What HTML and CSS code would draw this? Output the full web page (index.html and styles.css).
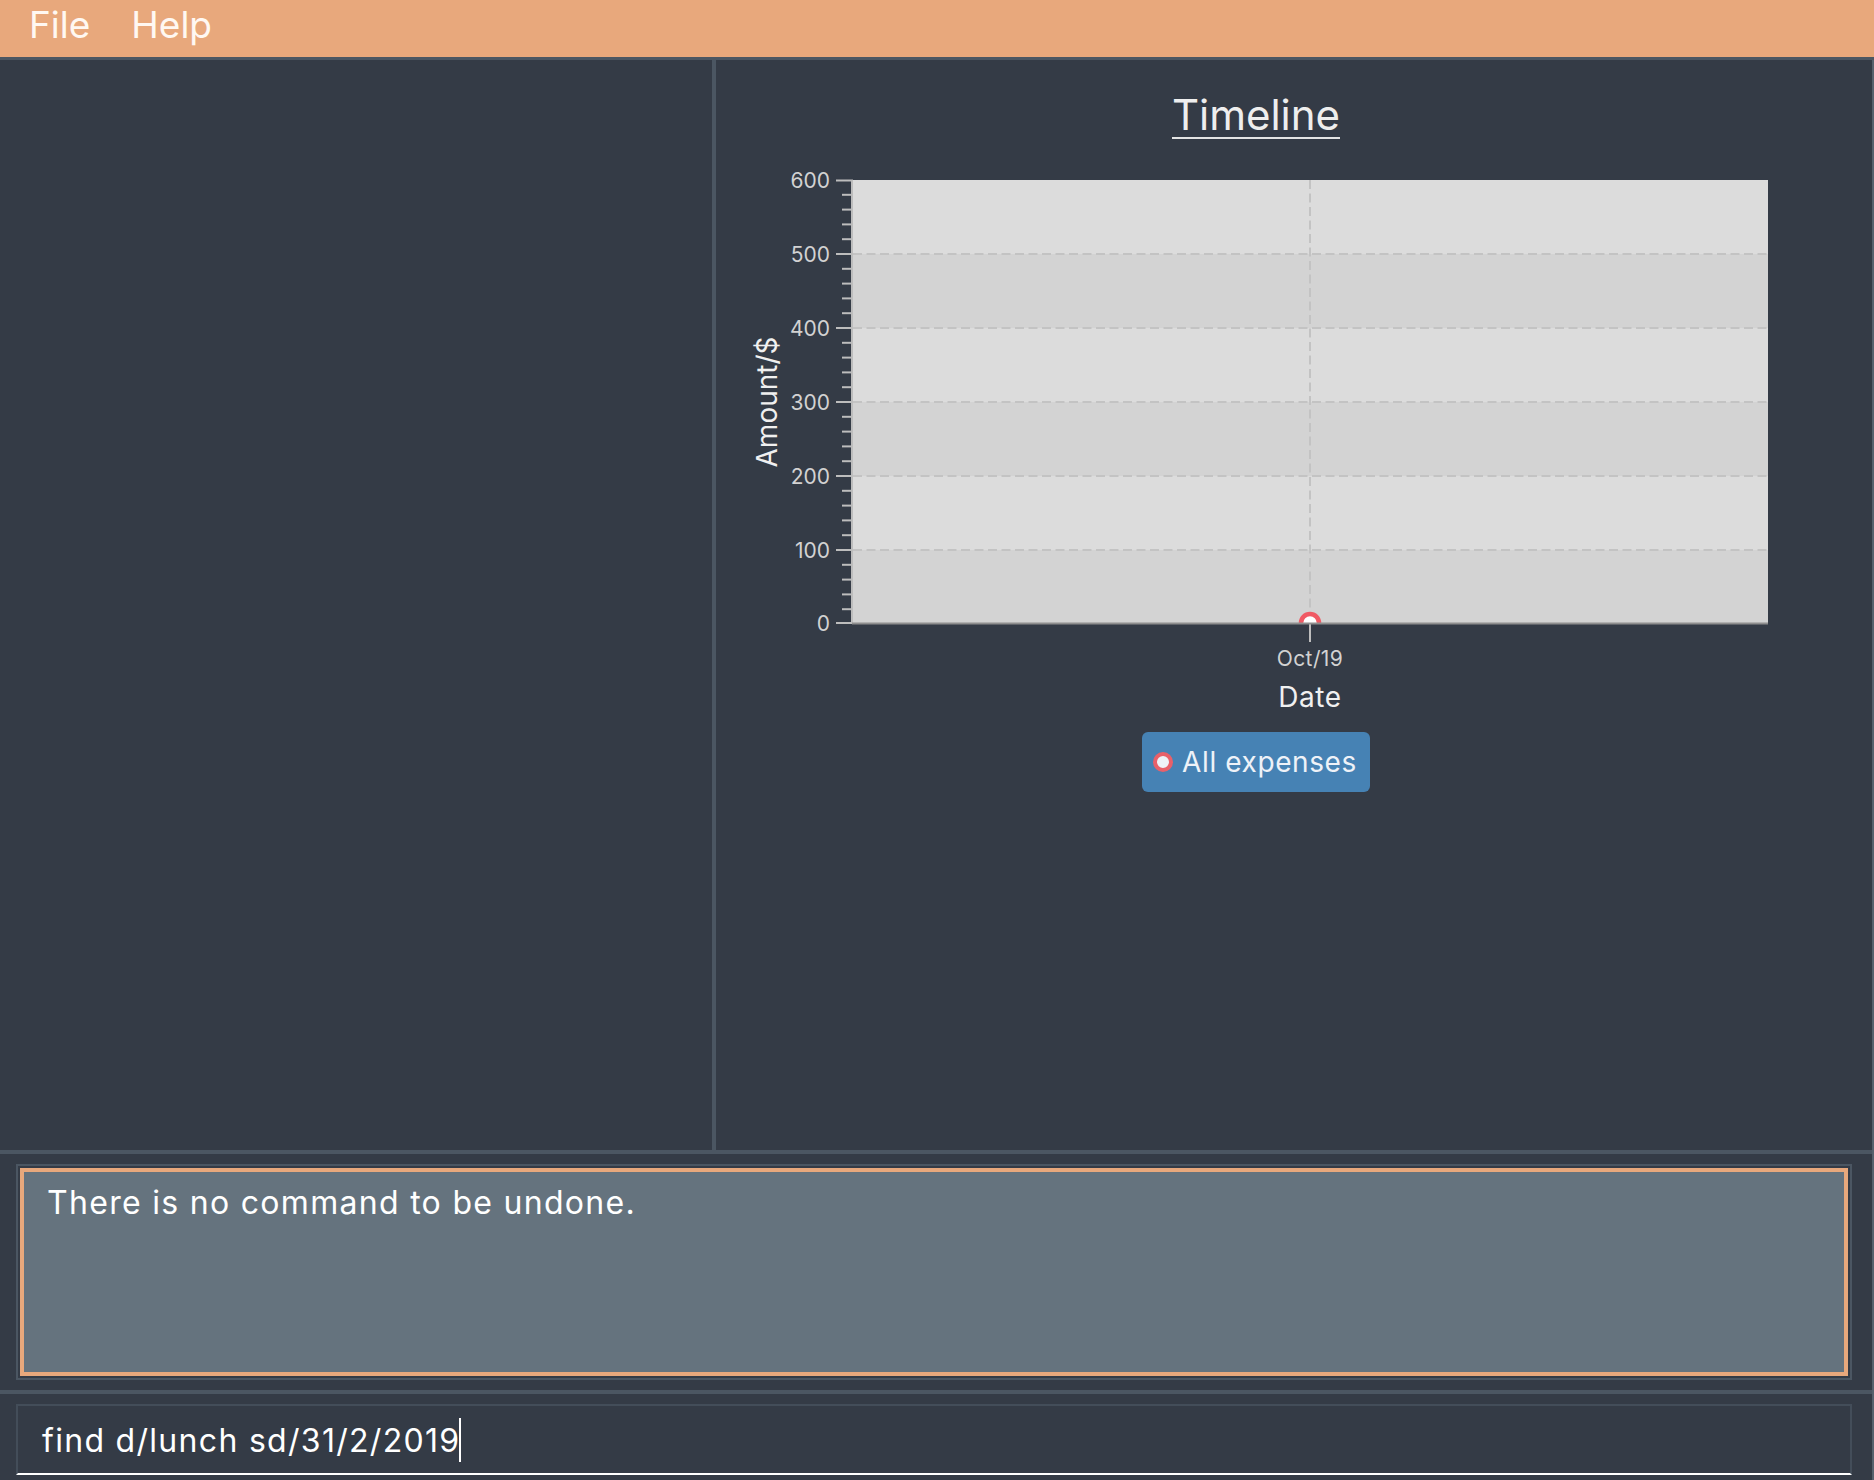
FILE: index.html
```html
<!DOCTYPE html>
<html>
<head>
<meta charset="utf-8">
<title>Expense Tracker</title>
<link rel="stylesheet" href="styles.css">
</head>
<body>
<div class="window">
  <div class="menubar">
    <span class="menu-item">File</span>
    <span class="menu-item">Help</span>
  </div>
  <div class="body-area">
    <div class="main">
      <div class="left-pane"></div>
      <div class="divider"></div>
      <div class="right-pane">
        <div class="chart">
          <div class="chart-title"><span class="title-text">Timeline</span></div>
          <svg class="plot" width="1040" height="570" viewBox="0 0 1040 570" xmlns="http://www.w3.org/2000/svg">
            <defs>
              <clipPath id="plotclip"><rect x="117" y="30" width="915" height="443"/></clipPath>
            </defs>
            <rect x="117" y="30" width="915" height="74" fill="#dcdcdc"/>
            <rect x="117" y="104" width="915" height="74" fill="#d3d3d3"/>
            <rect x="117" y="178" width="915" height="74" fill="#dcdcdc"/>
            <rect x="117" y="252" width="915" height="74" fill="#d3d3d3"/>
            <rect x="117" y="326" width="915" height="74" fill="#dcdcdc"/>
            <rect x="117" y="400" width="915" height="74" fill="#d3d3d3"/>
            <g stroke="#c3c3c3" stroke-width="2" stroke-dasharray="9 4.5">
              <line x1="117" y1="104" x2="1034" y2="104"/>
              <line x1="117" y1="178" x2="1034" y2="178"/>
              <line x1="117" y1="252" x2="1034" y2="252"/>
              <line x1="117" y1="326" x2="1034" y2="326"/>
              <line x1="117" y1="400" x2="1034" y2="400"/>
              <line x1="574" y1="30" x2="574" y2="474"/>
            </g>
            <g stroke="#bdbdbd" stroke-width="2">
              <line x1="116" y1="30" x2="116" y2="474"/>
              <line x1="100" y1="30.5" x2="117" y2="30.5"/>
              <line x1="100" y1="104" x2="117" y2="104"/>
              <line x1="100" y1="178" x2="117" y2="178"/>
              <line x1="100" y1="252" x2="117" y2="252"/>
              <line x1="100" y1="326" x2="117" y2="326"/>
              <line x1="100" y1="400" x2="117" y2="400"/>
              <line x1="100" y1="473" x2="117" y2="473"/>
              <line x1="106" y1="44.8" x2="117" y2="44.8"/>
              <line x1="106" y1="59.6" x2="117" y2="59.6"/>
              <line x1="106" y1="74.4" x2="117" y2="74.4"/>
              <line x1="106" y1="89.2" x2="117" y2="89.2"/>
              <line x1="106" y1="118.8" x2="117" y2="118.8"/>
              <line x1="106" y1="133.6" x2="117" y2="133.6"/>
              <line x1="106" y1="148.4" x2="117" y2="148.4"/>
              <line x1="106" y1="163.2" x2="117" y2="163.2"/>
              <line x1="106" y1="192.8" x2="117" y2="192.8"/>
              <line x1="106" y1="207.6" x2="117" y2="207.6"/>
              <line x1="106" y1="222.4" x2="117" y2="222.4"/>
              <line x1="106" y1="237.2" x2="117" y2="237.2"/>
              <line x1="106" y1="266.8" x2="117" y2="266.8"/>
              <line x1="106" y1="281.6" x2="117" y2="281.6"/>
              <line x1="106" y1="296.4" x2="117" y2="296.4"/>
              <line x1="106" y1="311.2" x2="117" y2="311.2"/>
              <line x1="106" y1="340.8" x2="117" y2="340.8"/>
              <line x1="106" y1="355.6" x2="117" y2="355.6"/>
              <line x1="106" y1="370.4" x2="117" y2="370.4"/>
              <line x1="106" y1="385.2" x2="117" y2="385.2"/>
              <line x1="106" y1="414.8" x2="117" y2="414.8"/>
              <line x1="106" y1="429.6" x2="117" y2="429.6"/>
              <line x1="106" y1="444.4" x2="117" y2="444.4"/>
              <line x1="106" y1="459.2" x2="117" y2="459.2"/>
              <line x1="574" y1="474" x2="574" y2="492"/>
            </g>
            <circle cx="574" cy="473" r="9" fill="#ffffff" stroke="#f05a64" stroke-width="4.5" clip-path="url(#plotclip)"/>
            <line x1="116" y1="473.5" x2="1032" y2="473.5" stroke="#8e8e8e" stroke-width="2"/>
            <g class="tick-label" text-anchor="end">
              <text x="94" y="38">600</text>
              <text x="94" y="112">500</text>
              <text x="94" y="186">400</text>
              <text x="94" y="260">300</text>
              <text x="94" y="334">200</text>
              <text x="94" y="408">100</text>
              <text x="94" y="481">0</text>
            </g>
            <text class="tick-label tick-x" x="574" y="516" text-anchor="middle">Oct/19</text>
            <text class="axis-label axis-x" x="574" y="557" text-anchor="middle">Date</text>
            <text class="axis-label" x="41" y="252" text-anchor="middle" transform="rotate(-90 41 252)">Amount/$</text>
          </svg>
          <div class="legend-row">
            <div class="legend">
              <span class="legend-symbol"></span>
              <span class="legend-text">All expenses</span>
            </div>
          </div>
        </div>
      </div>
    </div>
    <div class="hsep"></div>
    <div class="result-wrap">
      <div class="result-frame">
        <div class="result-text">There is no command to be undone.</div>
      </div>
    </div>
    <div class="hsep"></div>
    <div class="command-wrap">
      <div class="command-box">find d/lunch sd/31/2/2019<span class="caret"></span></div>
    </div>
  </div>
</div>
</body>
</html>
```

FILE: styles.css
```css
html, body {
  margin: 0;
  padding: 0;
  background: #343b46;
}

body {
  font-family: Inter, "Noto Sans", sans-serif;
  color: #ffffff;
}

.window {
  width: 1874px;
  height: 1480px;
  display: flex;
  flex-direction: column;
  overflow: hidden;
}

.menubar {
  height: 57px;
  background: #e8a87c;
  border-bottom: 3px solid #4b5662;
  display: flex;
  align-items: flex-start;
  gap: 41px;
  padding-left: 29px;
  box-sizing: content-box;
}

.menu-item {
  font-size: 37px;
  line-height: 1.21;
  padding-top: 3px;
  color: #fff8f2;
}

.body-area {
  flex: 1;
  display: flex;
  flex-direction: column;
  border-right: 2px solid #56616d;
  min-height: 0;
}

.main {
  flex: 1;
  display: flex;
  min-height: 0;
}

.left-pane {
  width: 712px;
}

.divider {
  width: 4px;
  background: #4b5662;
}

.right-pane {
  flex: 1;
  padding-top: 33px;
}

.chart {
  width: 1040px;
  margin-left: 20px;
}

.chart-title {
  text-align: center;
}

.title-text {
  display: inline-block;
  font-size: 42px;
  line-height: 44px;
  color: #eeeeee;
  border-bottom: 2px solid #e4e4e4;
}

.plot {
  display: block;
  margin-top: 11px;
}

.tick-label {
  font-family: Inter, "Noto Sans", sans-serif;
  font-size: 21px;
  fill: #d2d2d2;
}

.tick-x {
  letter-spacing: 0.4px;
}

.axis-label {
  font-family: Inter, "Noto Sans", sans-serif;
  font-size: 28px;
  fill: #f0f0f0;
}

.axis-x {
  letter-spacing: 0.6px;
}

.legend-row {
  display: flex;
  justify-content: center;
  margin-top: 12px;
}

.legend {
  height: 60px;
  box-sizing: border-box;
  background: #4682b4;
  border-radius: 6px;
  display: flex;
  align-items: center;
  gap: 9px;
  padding: 0 13px 0 11px;
}

.legend-symbol {
  width: 12px;
  height: 12px;
  border: 4px solid #e8606a;
  border-radius: 50%;
  background: #eef2f8;
}

.legend-text {
  font-size: 28px;
  letter-spacing: 0.6px;
  color: #eef2f8;
}

.hsep {
  height: 4px;
  background: #4b5662;
  flex: none;
}

.result-wrap {
  flex: none;
  padding: 10px 20px 10px 16px;
}

.result-frame {
  height: 216px;
  box-sizing: border-box;
  border: 2px solid #4b5662;
  padding: 2px;
}

.result-text {
  height: 100%;
  box-sizing: border-box;
  border: 4px solid #e8a87c;
  background: #65737e;
  padding: 12px 23px;
  font-size: 32px;
  letter-spacing: 1.3px;
  line-height: 1.21;
  color: #ffffff;
}

.command-wrap {
  flex: none;
  padding: 10px 20px 5px 16px;
}

.command-box {
  height: 71px;
  box-sizing: border-box;
  border: 2px solid #434d59;
  border-bottom: 2px solid #ffffff;
  padding: 12px 24px 0;
  font-size: 32px;
  letter-spacing: 1.3px;
  line-height: 1.21;
  color: #ffffff;
  white-space: nowrap;
}

.caret {
  display: inline-block;
  width: 2px;
  height: 44px;
  background: #ffffff;
  vertical-align: -10px;
  margin-left: -1px;
}
```
